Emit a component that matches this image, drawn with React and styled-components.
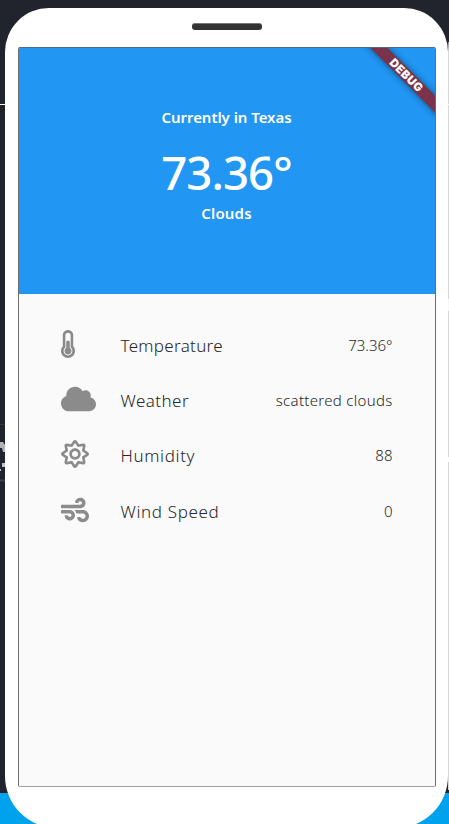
import React from "react";
import styled, { createGlobalStyle } from "styled-components";
import { FaThermometerHalf, FaCloud, FaRegSun, FaWind } from "react-icons/fa";

const GlobalStyle = createGlobalStyle`
  *, *::before, *::after { box-sizing: border-box; }
  html, body { margin: 0; padding: 0; overflow: hidden; }
`;

const Desktop = styled.div`
  position: relative;
  width: 449px;
  height: 824px;
  overflow: hidden;
  padding: 8px 1px 0 5px;
  background: linear-gradient(#21242d 104px, #fff 104px, #fff 105px, #202126 105px, #21242d 122px, #21242d 793px, #00a2ed 793px);
  font-family: "Noto Sans", "Open Sans", sans-serif;
`;

const WindowEdge = styled.div`
  position: absolute;
  top: 42px;
  right: 0;
  width: 1px;
  height: 748px;
  background: linear-gradient(#8b8c90, #d8d8d8 10px, #d8d8d8 62px, #fff 62px, #fff 63px, #d8d8d8 63px, #d8d8d8 257px, #f8f8f8 257px, #f8f8f8 269px, #d8d8d8 269px, #d8d8d8 415px, #fff 415px, #fff 420px, #d8d8d8 420px);
`;

const BackdropMarks = styled.svg`
  position: absolute;
  left: 0;
  top: 420px;
  width: 5px;
  height: 64px;
`;

const Phone = styled.div`
  position: relative;
  width: 443px;
  height: 820px;
  border-radius: 44px 44px 52px 52px;
  background: #fff;
  display: flex;
  flex-direction: column;
  align-items: center;
  padding-top: 15px;
`;

const Speaker = styled.div`
  width: 70px;
  height: 7px;
  border-radius: 3px;
  background: #333;
  border-top: 1px solid #777;
`;

const Screen = styled.main`
  position: relative;
  width: 418px;
  height: 740px;
  margin-top: 17px;
  border: 1px solid #6e6e6e;
  border-top-color: #4d6b87;
  border-bottom-color: #a2a2a2;
  border-radius: 2px;
  background: #fafafa;
  overflow: hidden;
`;

const Header = styled.header`
  height: 246px;
  background: #2196f3;
  color: #fff;
  display: flex;
  flex-direction: column;
  align-items: center;
  padding-top: 59px;
`;

const Caption = styled.div`
  font-size: 15px;
  line-height: 20px;
  font-weight: 600;
  letter-spacing: ${(p) => p.$spacing}px;
  white-space: nowrap;
`;

const Degrees = styled.div`
  height: 76px;
  line-height: 90px;
  font-size: 45.5px;
  font-weight: 550;
  letter-spacing: -0.9px;
`;

const Ribbon = styled.div`
  position: absolute;
  left: 327.9px;
  top: 21px;
  width: 120px;
  height: 12px;
  transform: rotate(45deg);
  background: #7b3349;
  box-shadow: 0 0 6px rgba(0, 0, 0, 0.5);
  color: #fff;
  font: 900 11.5px/12px Inter, sans-serif;
  text-align: center;
  text-indent: 1px;
  letter-spacing: 0.4px;
`;

const Readings = styled.ul`
  list-style: none;
  margin: 0;
  padding: 24px 42px 0 42px;
`;

const Reading = styled.li`
  display: grid;
  grid-template-columns: 60px 1fr auto;
  align-items: center;
  height: 55.2px;
  color: #262626;
  font-weight: 350;

  svg {
    height: 28px;
    width: ${(p) => p.$iconWidth}px;
    margin-bottom: 3px;
    color: #8b8b8b;
    display: block;
  }
`;

const Label = styled.span`
  font-size: 17px;
  letter-spacing: ${(p) => p.$spacing}px;
`;

const Value = styled.span`
  font-size: 15px;
  margin-bottom: 1px;
  letter-spacing: ${(p) => p.$spacing}px;
`;

const readings = [
  { Icon: FaThermometerHalf, width: 14, label: "Temperature", value: "73.36°", ls: 0.3, vs: 0 },
  { Icon: FaCloud, width: 35, label: "Weather", value: "scattered clouds", ls: 0.45, vs: 0.3 },
  { Icon: FaRegSun, width: 28, label: "Humidity", value: "88", ls: 0.65, vs: 0 },
  { Icon: FaWind, width: 28, label: "Wind Speed", value: "0", ls: 0.65, vs: 0 },
];

export default function App() {
  return (
    <Desktop>
      <GlobalStyle />
      <WindowEdge />
      <BackdropMarks viewBox="0 0 5 64">
        <path d="M0 4.5h5" stroke="#3c3a2c" />
        <path d="M0 22h3l2 3v7H3l-1-4H0z" fill="#b4b4b8" />
        <path d="M2 43h3v4H2zM0 49h1v2H0z" fill="#c4c4c8" />
        <path d="M0 60.5h5" stroke="#3c4048" strokeWidth="2" />
      </BackdropMarks>
      <Phone>
        <Speaker />
        <Screen>
          <Header>
            <Caption $spacing={-0.05}>Currently in Texas</Caption>
            <Degrees>73.36°</Degrees>
            <Caption $spacing={0.2}>Clouds</Caption>
          </Header>
          <Readings>
            {readings.map(({ Icon, width, label, value, ls, vs }) => (
              <Reading key={label} $iconWidth={width}>
                <Icon />
                <Label $spacing={ls}>{label}</Label>
                <Value $spacing={vs}>{value}</Value>
              </Reading>
            ))}
          </Readings>
          <Ribbon>DEBUG</Ribbon>
        </Screen>
      </Phone>
    </Desktop>
  );
}
